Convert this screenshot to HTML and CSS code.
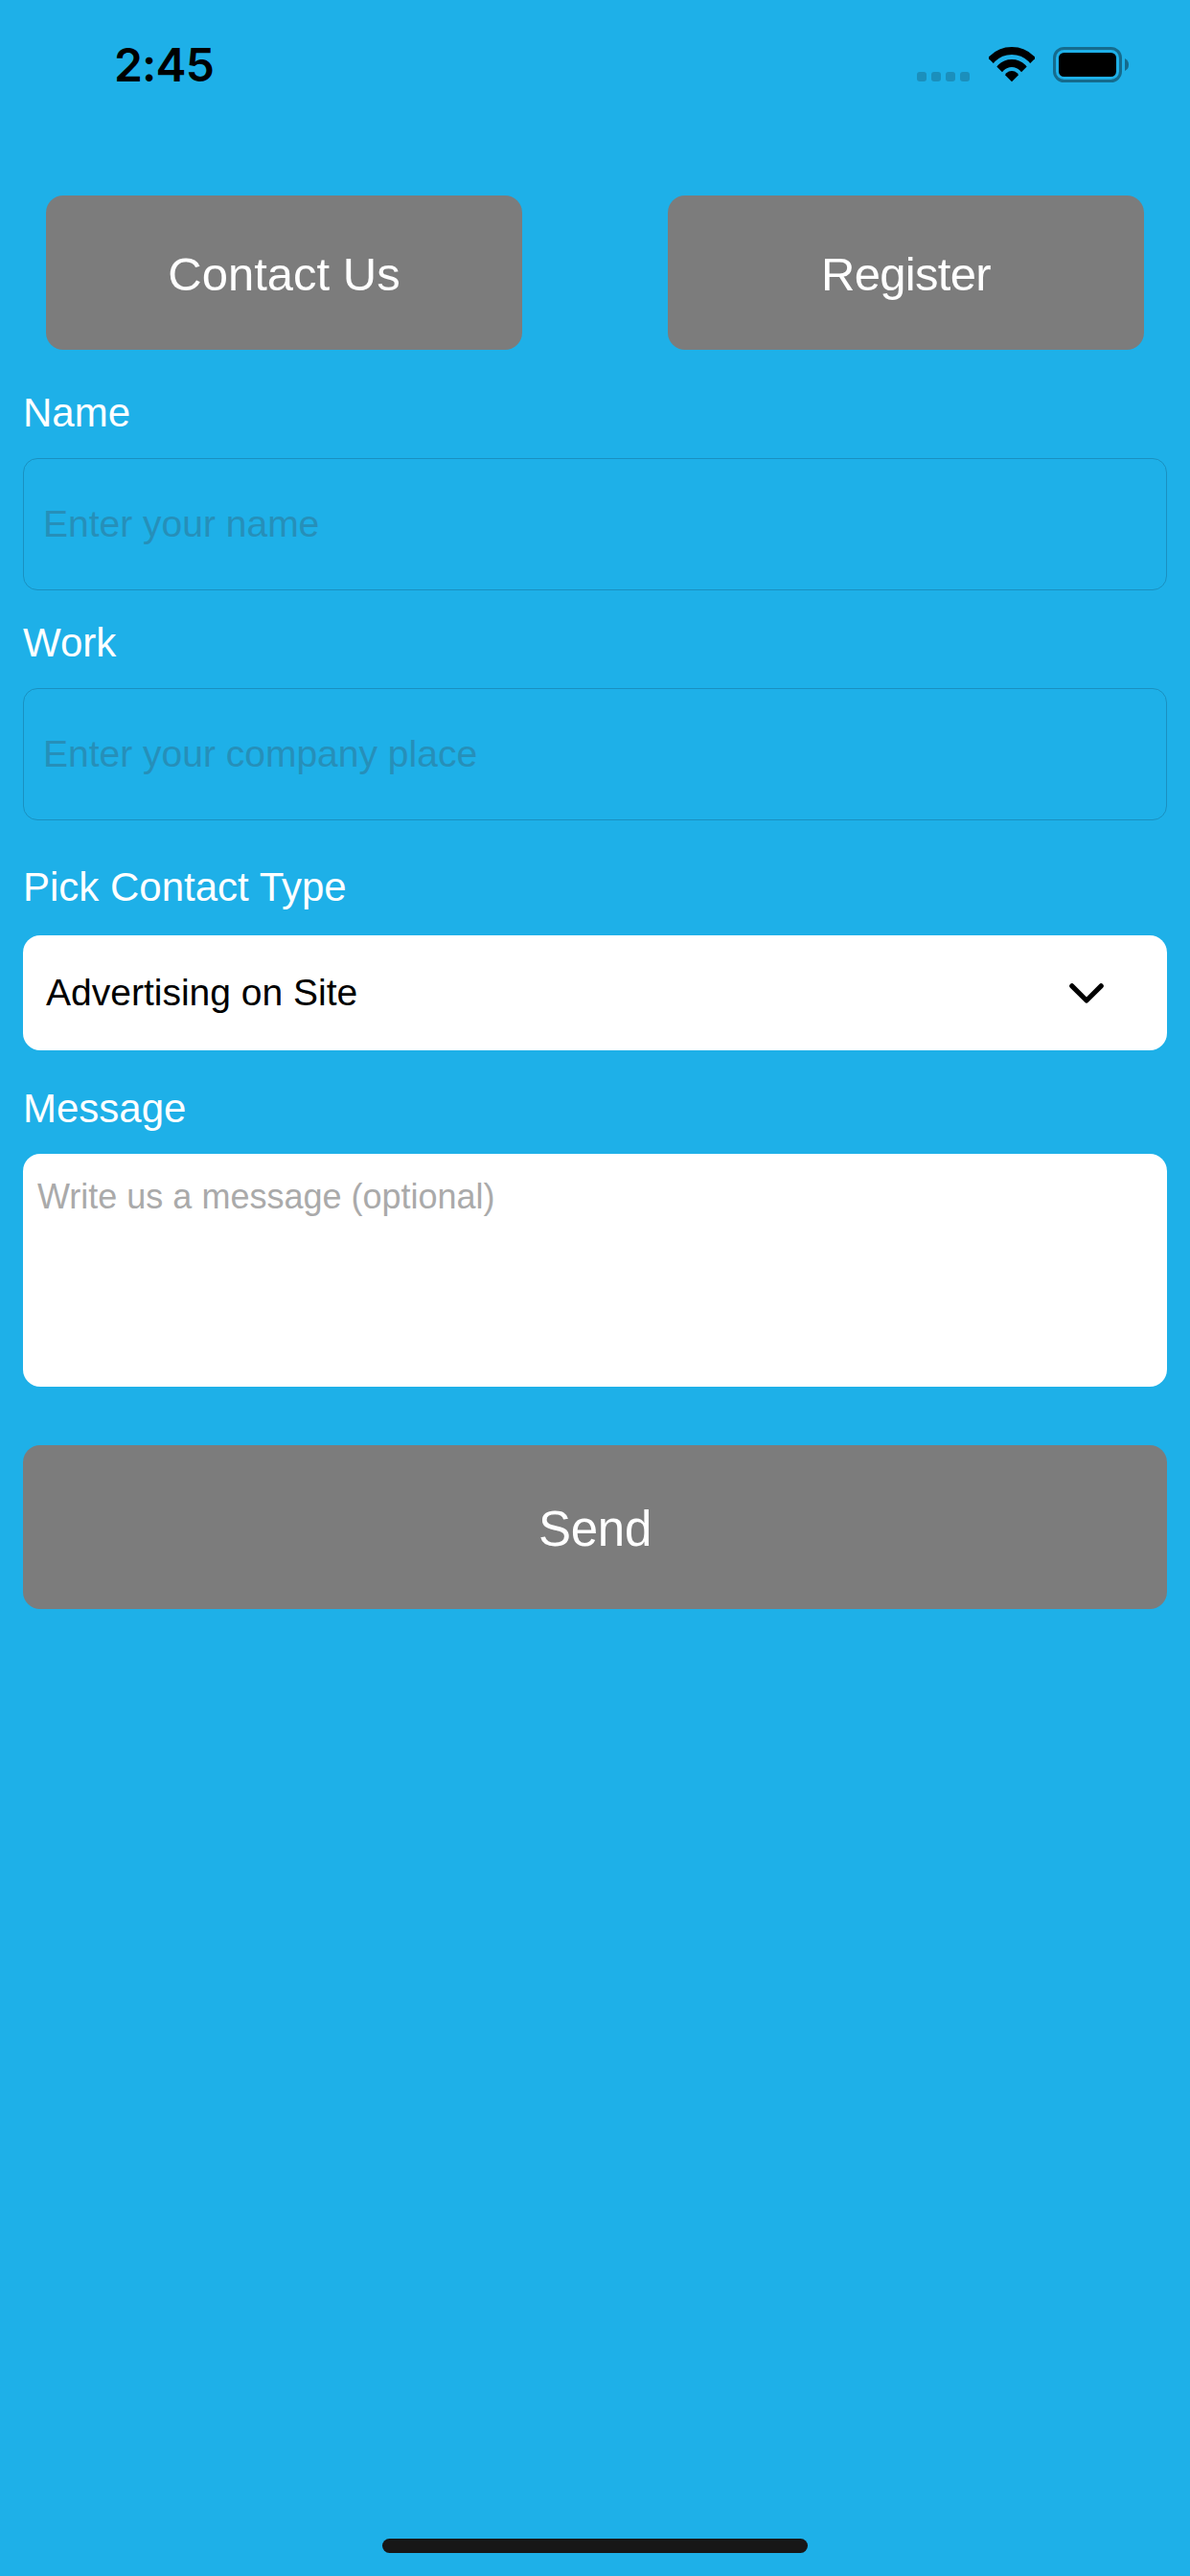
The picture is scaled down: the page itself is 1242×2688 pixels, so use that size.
FILE: index.html
```html
<!DOCTYPE html>
<html lang="en">
<head>
<meta charset="utf-8">
<title>Contact Us</title>
<link rel="stylesheet" href="styles.css">
</head>
<body>
<div class="screen">
  <header class="status">
    <span class="time">2:45</span>
    <div class="indicators">
      <div class="dots"><i></i><i></i><i></i><i></i></div>
      <svg class="wifi" width="48" height="37" viewBox="0 0 48 37">
        <clipPath id="fan"><path d="M24 36.2L-1 11.2V-1H49V11.2Z"/></clipPath>
        <g clip-path="url(#fan)">
          <circle cx="24" cy="33" r="29" fill="none" stroke="#000" stroke-width="8"/>
          <circle cx="24" cy="33" r="16" fill="none" stroke="#000" stroke-width="8"/>
          <circle cx="24" cy="33" r="8"/>
        </g>
      </svg>
      <svg class="battery" width="79" height="37" viewBox="0 0 79 37">
        <rect x="1.5" y="1.5" width="69" height="34" rx="10" fill="none" stroke="#156b8d" stroke-width="3"/>
        <rect x="6" y="6" width="60" height="25" rx="5.5"/>
        <path d="M75 12Q79 14 79 18.5Q79 23 75 25Z" fill="#156b8d"/>
      </svg>
    </div>
  </header>
  <nav class="tabs">
    <button class="btn">Contact Us</button>
    <button class="btn btn-register">Register</button>
  </nav>
  <main class="form">
    <div class="label label-name">Name</div>
    <div class="field"><span>Enter your name</span></div>
    <div class="label label-work">Work</div>
    <div class="field"><span>Enter your company place</span></div>
    <div class="label label-type">Pick Contact Type</div>
    <div class="select">
      <span>Advertising on Site</span>
      <svg width="36" height="21" viewBox="0 0 36 21"><path d="M2.8 2.8L18 18L33.2 2.8" fill="none" stroke="#000" stroke-width="5.2" stroke-linecap="round" stroke-linejoin="round"/></svg>
    </div>
    <div class="label label-message">Message</div>
    <div class="message">Write us a message (optional)</div>
    <button class="btn send">Send</button>
  </main>
  <div class="home"></div>
</div>
</body>
</html>
```
FILE: styles.css
```css
* { box-sizing: border-box; }
body { margin: 0; background: #1eb0e8; font-family: "Liberation Sans", Arial, sans-serif; }
.screen { width: 1242px; height: 2688px; display: flex; flex-direction: column; }

.status { height: 204px; padding: 49px 64px 0 119px; display: flex; justify-content: space-between; align-items: flex-start; }
.time { font: 600 48px/37px Inter, sans-serif; letter-spacing: -0.8px; }
.indicators { display: flex; align-items: flex-start; }
.dots { display: flex; gap: 5px; margin: 26px 20px 0 0; }
.dots i { width: 10px; height: 10px; border-radius: 3px; background: #1b8fbc; }
.battery { margin-left: 19px; }

.tabs { display: flex; justify-content: space-between; padding: 0 48px; }
.btn { border: 0; border-radius: 18px; background: #7c7c7c; color: #fff; font-family: inherit; font-size: 49px; width: 497px; height: 161px; padding: 2px 0 0; }
.btn-register { letter-spacing: -0.7px; }

.form { display: flex; flex-direction: column; padding: 0 24px; }
.label { color: #fff; font-size: 42px; line-height: 48px; margin-bottom: 23px; }
.label-name { margin-top: 42px; }
.label-work { margin-top: 31px; }
.label-type { margin-top: 46px; margin-bottom: 26px; }
.label-message { margin-top: 37px; }
.field { height: 138px; border: 1px solid #1a90c0; border-radius: 15px; padding-left: 20px; display: flex; align-items: center; color: #268fb9; font-size: 39px; }
.select { height: 120px; border-radius: 18px; background: #fff; color: #000; display: flex; justify-content: space-between; align-items: center; padding: 0 66px 0 24px; font-size: 39px; }
.message { height: 243px; border-radius: 18px; background: #fff; color: #aaa; font-size: 36px; line-height: 44px; padding: 23px 15px 0; }
.send { width: 100%; height: 171px; margin-top: 61px; padding-top: 3px; font-size: 51px; letter-spacing: -0.3px; }

.home { width: 444px; height: 15px; border-radius: 8px; background: #171717; margin: auto auto 24px; }
```
